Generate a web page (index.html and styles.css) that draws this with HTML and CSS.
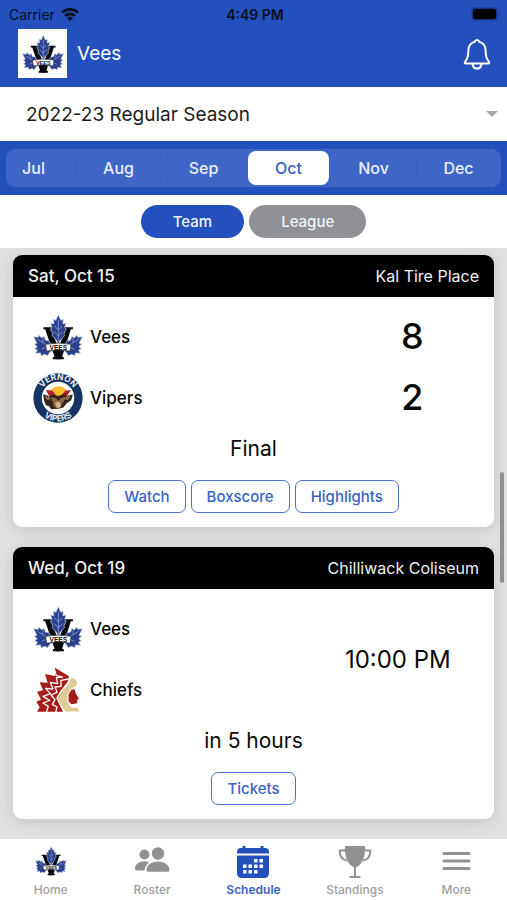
FILE: index.html
```html
<!DOCTYPE html>
<html lang="en">
<head>
    <meta charset="UTF-8">
    <meta name="viewport" content="width=device-width, initial-scale=1.0">
    <title>Vees - Schedule</title>
    <link rel="stylesheet" href="styles.css">
</head>
<body>
    <header class="top">
        <div class="status-bar">
            <span class="carrier">Carrier
                <svg width="18" height="13" viewBox="0 0 18 13" aria-hidden="true">
                    <path fill="none" stroke="#0a0f1e" stroke-width="2.6" d="M1 4.6a11.6 11.6 0 0 1 16 0M4 7.9a7.2 7.2 0 0 1 10 0"/>
                    <path fill="#0a0f1e" d="M5.9 10q3.100-2.600 6.200 0L9 13z"/>
                </svg>
            </span>
            <span class="clock">4:49 PM</span>
            <svg class="battery" width="30" height="14" viewBox="0 0 30 14" aria-hidden="true">
                <rect x=".5" y=".5" width="26" height="13" rx="4" fill="#173683" stroke="#1c40a0"/>
                <rect x="2" y="2" width="23" height="10" rx="2.500" fill="#000"/>
                <path fill="#173683" d="M28 5q2 2 0 4z"/>
            </svg>
        </div>
        <div class="title-bar">
            <span class="team-badge">
                <!-- Team logo, reused below -->
                <svg width="42" height="40" viewBox="0 0 144 130">
                    <g id="vees-logo">
                        <path fill="#08090d" d="M30 37h27v6h-5l21 54 21-54h-6v-6h27v6h-6L84 121l5 3v5H57v-5l5-3L35 43h-5z"/>
                        <g fill="#2b418f" stroke="#c9cfe2" stroke-width="2" stroke-linejoin="round">
                            <path d="M73 1l7 16 7-3-1 13 9-2-4 14 5 3-7 13 2 6-13 14-5 10-5-10-13-14 2-6-7-13 5-3-4-14 9 2-1-13 7 3z"/>
                            <path d="M2 64l13 2 1-7 10 9 6-5 4 11 9 1 8 13 8 6 3 8-13 3-9 14-8-4-11 4-1-8-15 1 6-9-8-4 7-6-8-8 7-2z"/>
                            <path d="M142 64l-13 2-1-7-10 9-6-5-4 11-9 1-8 13-8 6-3 8 13 3 9 14 8-4 11 4 1-8 15 1-6-9 8-4-7-6 8-8-7-2z"/>
                        </g>
                        <path fill="none" stroke="#9fb0dd" stroke-width="2" d="M73 16v62M73 45l-11-12M73 45l11-12M73 62l-12-13M73 62l12-13M13 72l36 22M28 81l1-11M25 100l21-8M131 72l-36 22M116 81l-1-11M119 100l-21-8"/>
                        <path fill="#08090d" d="M61 103h24l-6 26H67z"/>
                        <path fill="#fff" stroke="#11131b" stroke-width="2" d="M36 86q37-7 74 0l-3 20q-34-7-68 0z"/>
                        <text x="73" y="102" text-anchor="middle" class="logo-word banner">VEES</text>
                    </g>
                </svg>
            </span>
            <h1>Vees</h1>
            <button class="bell" aria-label="Notifications">
                <svg width="28" height="32" viewBox="0 0 28 32" fill="none" stroke="#fff" stroke-width="2" stroke-linejoin="round">
                    <path d="M14 2q-1.800 0-2.400 1.900C7.500 5 5.400 8.300 5.400 12.500c0 6.500-1 8.500-3.100 10.800-1 1.200-.6 2.200.7 2.200h22c1.300 0 1.700-1 .7-2.200-2.100-2.300-3.100-4.300-3.100-10.800 0-4.200-2.100-7.500-6.200-8.600Q15.800 2 14 2z"/>
                    <path d="M9.500 26c.4 3 2.200 4.600 4.500 4.600s4.100-1.600 4.500-4.600"/>
                </svg>
            </button>
        </div>
    </header>

    <div class="season">
        <select aria-label="Season">
            <option>2022-23 Regular Season</option>
        </select>
        <svg class="caret" width="12" height="6" viewBox="0 0 12 6" aria-hidden="true"><path fill="#a9a9a9" d="M0 0h12L6 6z"/></svg>
    </div>

    <nav class="months" aria-label="Month">
        <div class="segments">
            <button>Jul</button>
            <button>Aug</button>
            <button>Sep</button>
            <button class="active">Oct</button>
            <button>Nov</button>
            <button>Dec</button>
        </div>
    </nav>

    <div class="scope">
        <button class="active">Team</button>
        <button>League</button>
    </div>

    <!-- Games -->
    <main class="games">
        <article class="card">
            <div class="card-header">
                <h2>Sat, Oct 15</h2>
                <span>Kal Tire Place</span>
            </div>
            <div class="matchup">
                <div class="teams">
                    <div class="team"><svg width="50" height="46" viewBox="0 0 144 130"><use href="#vees-logo"/></svg>Vees</div>
                    <div class="team">
                        <svg width="50" height="50" viewBox="0 0 148 148" aria-hidden="true">
                            <defs>
                                <path id="arc-top" d="M20 74a54 54 0 0 1 108 0"/>
                                <path id="arc-bottom" d="M5 74a69 69 0 0 0 138 0"/>
                            </defs>
                            <circle cx="74" cy="74" r="73" fill="#153461"/>
                            <circle cx="74" cy="74" r="48" fill="#fff"/>
                            <circle cx="76" cy="68" r="29" fill="#f3bd2e"/>
                            <path fill="#b3202c" d="M38 50l19 2 12 15h14l13-15 16-2-8 13-13 12H57L46 65z"/>
                            <path fill="#35231c" d="M30 63l20 6 8-6 16 6 17-7 9 6 18-4-5 17-14 9-9 12-15 4-21 1-7-9-8-2-6-13z"/>
                            <path fill="#8b6a4c" d="M53 71l15 4 7 7 8-8 14-3-6 14-6 5-2 11-10 4-11-5-2-10z"/>
                            <path fill="#d7b184" d="M66 89l9-4 8 5-3 12-10 1z"/>
                            <path fill="none" stroke="#c8a27a" stroke-width="3" d="M37 69l9 11M44 69l7 9M109 69l-8 11M102 69l-6 9"/>
                            <g class="logo-word ring">
                                <text><textPath href="#arc-top" startOffset="50%">VERNON</textPath></text>
                                <text><textPath href="#arc-bottom" startOffset="50%">VIPERS</textPath></text>
                            </g>
                        </svg>Vipers
                    </div>
                </div>
                <div class="scores">
                    <span>8</span>
                    <span>2</span>
                </div>
            </div>
            <p class="state">Final</p>
            <div class="actions">
                <button>Watch</button>
                <button>Boxscore</button>
                <button>Highlights</button>
            </div>
        </article>

        <article class="card">
            <div class="card-header">
                <h2>Wed, Oct 19</h2>
                <span>Chilliwack Coliseum</span>
            </div>
            <div class="matchup">
                <div class="teams">
                    <div class="team"><svg width="50" height="46" viewBox="0 0 144 130"><use href="#vees-logo"/></svg>Vees</div>
                    <div class="team">
                        <svg width="50" height="46" viewBox="0 0 150 138" aria-hidden="true">
                            <path fill="#a51d1a" d="M66 2l42 26-4 16-22 28-12 21 20 41H12l8-13-10-17 14-6-12-24 18-4-10-24 24 1-8-26 30 6z"/>
                            <path fill="none" stroke="#fff" stroke-width="4" stroke-linejoin="round" d="M64 6l6 20 18 4-18 2 4 18-22-4 8 20-22-2 14 16-22 8 20 12-20 8 16 10-6 18M106 36l-22 4 0 18-18 2 6 16-18 8 12 14-8 14 14 8-4 16"/>
                            <path fill="#a51d1a" d="M110 69l15-2 3 12 10 16-6 4 1 10-18 3-9-10 0-18z"/>
                            <path fill="#dfcb93" stroke="#fff" stroke-width="3" stroke-linejoin="round" d="M114 30l13 5 7 12-4 11-15 8-11 18 1 21 10 15 20 1 5 14H98L80 111 72 91l15-21 16-15z"/>
                        </svg>Chiefs
                    </div>
                </div>
                <div class="time">10:00 PM</div>
            </div>
            <p class="state">in 5 hours</p>
            <div class="actions">
                <button>Tickets</button>
            </div>
        </article>
        <span class="scroll-thumb"></span>
    </main>

    <!-- Tab bar -->
    <nav class="tabs">
        <a href="#"><svg width="32" height="32" viewBox="0 0 144 130"><use href="#vees-logo"/></svg>Home</a>
        <a href="#">
            <svg width="36" height="32" viewBox="0 0 36 32" fill="#919191">
                <circle cx="10.500" cy="9.500" r="5"/>
                <circle cx="24" cy="8.500" r="6.200"/>
                <path d="M15 17.500q-2-1.200-4.500-1.200C5 16.300 1 19.500 1 24q0 1.500 1.500 1.500h8q.5-5 4.500-8zM24 16.500c7 0 11.500 3.800 11.500 8.700q0 1.600-1.700 1.600H14.200q-1.700 0-1.700-1.600c0-4.900 4.500-8.700 11.500-8.700z"/>
            </svg>Roster
        </a>
        <a href="#" class="active">
            <svg width="34" height="34" viewBox="0 0 34 34">
                <path fill="#2350bd" d="M6.500 3V1h3v2h15V1h3v2H29q4 0 4 4v1.500H1V7q0-4 4-4zM1 10.500h32V28q0 5-5 5H6q-5 0-5-5z"/>
                <path fill="#fff" d="M18 14h3.500v3.500H18zM23.500 14h3.500v3.500h-3.500zM7 19.500h3.500v3.500H7zM12.500 19.500h3.500v3.500h-3.500zM18 19.500h3.500v3.500H18zM23.500 19.500h3.500v3.500h-3.500zM7 25h3.500v3.500H7zM12.500 25h3.500v3.500h-3.500zM18 25h3.500v3.500H18z"/>
            </svg>Schedule
        </a>
        <a href="#">
            <svg width="34" height="34" viewBox="0 0 34 34">
                <path fill="#919191" d="M8 1h18q1.300 0 1.200 1.500C27 13.500 23.500 20 18 22.300V31h3.500q1.200 0 1.200 1T21.500 33h-9q-1.200 0-1.200-1t1.200-1H16v-8.700C10.500 20 7 13.500 6.800 2.500Q6.700 1 8 1z"/>
                <path fill="none" stroke="#919191" stroke-width="2" d="M7 5.500H1.700c0 6 2.300 9.500 7.300 10M27 5.500h5.300c0 6-2.300 9.500-7.300 10"/>
            </svg>Standings
        </a>
        <a href="#">
            <svg width="30" height="32" viewBox="0 0 30 32" fill="none" stroke="#919191" stroke-width="3" stroke-linecap="round">
                <path d="M3 8.500h25M3 16h25M3 23.500h25"/>
            </svg>More
        </a>
    </nav>
</body>
</html>
```
FILE: styles.css
```css
* {
    margin: 0;
    padding: 0;
    box-sizing: border-box;
    font-family: Inter, Roboto, sans-serif;
}

body {
    display: flex;
    flex-direction: column;
    height: 100vh;
    background-color: #fff;
    color: #0a0a0a;
}

button {
    border: none;
    background: none;
    cursor: pointer;
}

svg {
    display: block;
    flex: none;
}

/* Lettering inside the logos */
.logo-word {
    font-family: "Liberation Sans", sans-serif;
    font-weight: 700;
}

.banner {
    font-size: 19px;
    fill: #11131b;
}

.ring {
    font-size: 25px;
    fill: #e8ecf3;
    text-anchor: middle;
}

/* Header */
.top {
    background-color: #2350bd;
}

.status-bar {
    display: grid;
    grid-template-columns: 1fr auto 1fr;
    align-items: center;
    height: 28px;
    padding: 0 6px 0 9px;
    font-size: 14px;
    color: #0a0f1e;
}

.carrier {
    display: flex;
    align-items: center;
    gap: 6px;
}

.clock {
    font-weight: 600;
}

.battery {
    justify-self: end;
}

.title-bar {
    display: flex;
    align-items: center;
    gap: 10px;
    height: 59px;
    padding: 0 16px 8px 18px;
}

.team-badge {
    display: grid;
    place-items: center;
    width: 49px;
    height: 49px;
    background-color: #fff;
}

.title-bar h1 {
    flex: 1;
    font-size: 19px;
    font-weight: 400;
    color: #fff;
}

/* Season picker */
.season {
    display: grid;
    align-items: center;
    height: 54px;
    padding: 0 9px 0 26px;
}

.season select,
.caret {
    grid-area: 1 / 1;
}

.season select {
    appearance: none;
    border: none;
    background: none;
    height: 100%;
    font-size: 19px;
    color: #1c1c1c;
}

.caret {
    justify-self: end;
    pointer-events: none;
}

/* Month segments */
.months {
    padding: 8px 6px;
    background-color: #2350bd;
}

.segments {
    display: flex;
    justify-content: flex-end;
    height: 38px;
    overflow: hidden;
    border-radius: 9px;
    background-color: #3f66c6;
}

.segments button {
    flex: 1 0 85px;
    margin: 2px 0;
    border-radius: 8px;
    font-size: 16px;
    font-weight: 500;
    color: #e9eefa;
    box-shadow: 1px 0 0 #3a5fbd;
}

.segments .active {
    flex-basis: 81px;
    margin: 2px;
    background-color: #fff;
    color: #3a62c4;
    box-shadow: none;
}

/* Team / League switch */
.scope {
    display: flex;
    justify-content: center;
    gap: 5px;
    padding: 10px;
}

.scope button {
    height: 33px;
    padding: 0 32px;
    border-radius: 17px;
    background-color: #909197;
    font-size: 15px;
    font-weight: 500;
    color: #f1f3f8;
}

.scope .active {
    background-color: #2350bd;
}

/* Game cards */
.games {
    position: relative;
    flex: 1;
    display: flex;
    flex-direction: column;
    gap: 20px;
    min-height: 0;
    overflow: hidden;
    padding: 7px 13px;
    background-color: #e2e2e2;
}

.card {
    flex: none;
    border-radius: 9px;
    background-color: #fff;
    box-shadow: 0 3px 16px rgba(0, 0, 0, 0.14);
}

.card-header {
    display: flex;
    justify-content: space-between;
    align-items: center;
    height: 42px;
    padding: 0 15px;
    border-radius: 9px 9px 0 0;
    background-color: #000;
    font-size: 16px;
    color: #f0f0f0;
}

.card-header h2 {
    font-size: 17px;
    font-weight: 500;
}

.matchup {
    display: flex;
    padding-top: 9px;
}

.teams {
    flex: 1;
    padding-left: 20px;
}

.team {
    display: flex;
    align-items: center;
    gap: 7px;
    height: 61px;
    font-size: 17px;
    font-weight: 500;
}

.scores {
    width: 34%;
    text-align: center;
    font-size: 36px;
    font-weight: 500;
    line-height: 61px;
}

.scores span {
    display: block;
}

.time {
    display: grid;
    place-items: center;
    width: 40%;
    font-size: 24px;
}

.state {
    text-align: center;
    font-size: 21px;
    line-height: 42px;
}

.actions {
    display: flex;
    justify-content: center;
    gap: 5px;
    padding: 10px 0 14px;
}

.actions button {
    height: 33px;
    padding: 0 15px;
    border: 1px solid #4a70cb;
    border-radius: 7px;
    font-size: 15px;
    font-weight: 500;
    color: #3a62c4;
}

.scroll-thumb {
    position: absolute;
    top: 224px;
    right: 3px;
    width: 4px;
    height: 111px;
    border-radius: 2px;
    background-color: #8f8f8f;
}

/* Tab bar */
.tabs {
    display: grid;
    grid-template-columns: repeat(5, 1fr);
    height: 61px;
    background-color: #fff;
}

.tabs a {
    display: flex;
    flex-direction: column;
    align-items: center;
    justify-content: space-between;
    padding: 6px 0 3px;
    font-size: 12px;
    font-weight: 500;
    line-height: 14px;
    color: #a0a0a0;
    text-decoration: none;
}

.tabs .active {
    font-weight: 600;
    color: #3a62c4;
}
```
